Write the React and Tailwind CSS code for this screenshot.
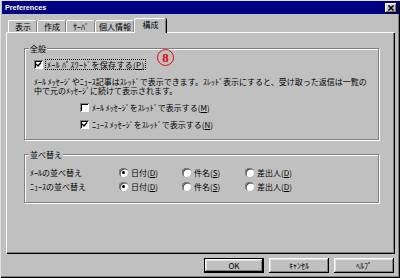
import React from "react";

const raised =
  "shadow-[inset_-1px_-1px_#000,inset_1px_1px_#fff,inset_-2px_-2px_#808080,inset_2px_2px_#dfdfdf]";

function Check({ checked }) {
  return (
    <div className="w-[9px] h-[9px] bg-white shadow-[inset_1px_1px_#808080,inset_-1px_-1px_#fff,inset_2px_2px_#000] flex items-center justify-center shrink-0">
      {checked && (
        <svg width="7" height="7" viewBox="0 0 7 7">
          <path d="M1 3 L3 5 L6 1.5" stroke="#000" strokeWidth="1.4" fill="none" />
        </svg>
      )}
    </div>
  );
}

function Radio({ checked }) {
  return (
    <div className="w-[9px] h-[9px] rounded-full bg-white shadow-[inset_1px_1px_#808080,inset_1.5px_1.5px_#303030] flex items-center justify-center shrink-0">
      {checked && <div className="w-[3px] h-[3px] rounded-full bg-black" />}
    </div>
  );
}

function Tab({ w, children, selected }) {
  if (selected)
    return (
      <div className="relative z-10 -mb-[1px] h-[15px] bg-[#c0c0c0] rounded-t-[2px] border-l border-t border-white shadow-[inset_-1px_0_#808080,1px_0_#000] flex items-start justify-center pt-[1px] w-[32px]">
        {children}
      </div>
    );
  return (
    <div
      className="h-[12px] rounded-t-[2px] border-l border-t border-white shadow-[inset_-1px_0_#808080,1px_0_#000] flex items-start justify-center pt-[1px]"
      style={{ width: w }}
    >
      {children}
    </div>
  );
}

function Btn({ children, def }) {
  return (
    <div
      className={`w-[60px] h-[15px] flex items-center justify-center ${
        def ? "border border-black" : ""
      }`}
    >
      <div className={`w-full h-full flex items-center justify-center ${raised}`}>{children}</div>
    </div>
  );
}

export default function App() {
  return (
    <div className="w-[400px] h-[278px] bg-[#c0c0c0] overflow-hidden border-l border-t border-[#dfdfdf] shadow-[inset_-1px_-1px_#000,inset_-2px_-2px_#808080] font-['Noto_Sans_CJK_JP',sans-serif] text-[8px] leading-[9px] text-black">
      {/* title bar */}
      <div className="mx-[1px] h-[13px] bg-[#000080] flex items-center justify-between pl-[3px] pr-[2px]">
        <span className="font-['Liberation_Sans',sans-serif] font-bold text-[7.2px] text-white leading-[8px]">
          Preferences
        </span>
        <div className={`w-[12px] h-[10px] bg-[#c0c0c0] flex items-center justify-center ${raised}`}>
          <svg width="6" height="6" viewBox="0 0 6 6">
            <path d="M0.5 0.5 L5.5 5.5 M5.5 0.5 L0.5 5.5" stroke="#000" strokeWidth="1.5" />
          </svg>
        </div>
      </div>

      {/* tabs */}
      <div className="mt-[4px] pl-[7px] h-[14px] flex items-end">
        <Tab w="29px">表示</Tab>
        <Tab w="29px">作成</Tab>
        <Tab w="29px">ｻｰﾊﾞ</Tab>
        <Tab w="39px">個人情報</Tab>
        <Tab selected>構成</Tab>
      </div>

      {/* panel */}
      <div className="ml-[5px] w-[388px] h-[221px] border-l border-t border-white shadow-[inset_-1px_-1px_#808080,1px_1px_#000] flex flex-col">
        {/* group 1 */}
        <div className="relative mt-[15px] ml-[17px] w-[355px] h-[92px] border border-[#808080] shadow-[inset_1px_1px_#fff,1px_1px_#fff] pl-[9px] pt-[10px]">
          <span className="absolute -top-[5px] left-[4px] bg-[#c0c0c0] px-[1px] leading-[9px]">全般</span>
          <div className="absolute left-[132px] top-[0px] w-[17px] h-[17px] rounded-full border-[1.5px] border-[#e8000b] flex items-center justify-center">
            <span className="font-['Liberation_Serif',serif] font-bold text-[13px] leading-[13px] text-[#e8000b]">8</span>
          </div>
          <div className="flex items-center h-[11px]">
            <Check checked />
            <div className="ml-[2px] px-[1px] h-[11px] inline-flex items-center border border-dotted border-black">
              <span className="leading-[9px] tracking-[0.3px]">
                ﾒｰﾙ ﾊﾟｽﾜｰﾄﾞを保存する(<u>P</u>)
              </span>
            </div>
          </div>
          <p className="mt-[7px]">
            ﾒｰﾙ ﾒｯｾｰｼﾞやﾆｭｰｽ記事はｽﾚｯﾄﾞで表示できます。ｽﾚｯﾄﾞ表示にすると、受け取った返信は一覧の
            <br />
            中で元のﾒｯｾｰｼﾞに続けて表示されます。
          </p>
          <div className="mt-[8px] ml-[46px] flex items-center gap-[3px] h-[9px]">
            <Check />
            <span>
              ﾒｰﾙ ﾒｯｾｰｼﾞをｽﾚｯﾄﾞで表示する(<u>M</u>)
            </span>
          </div>
          <div className="mt-[8px] ml-[46px] flex items-center gap-[3px] h-[9px]">
            <Check checked />
            <span>
              ﾆｭｰｽ ﾒｯｾｰｼﾞをｽﾚｯﾄﾞで表示する(<u>N</u>)
            </span>
          </div>
        </div>

        {/* group 2 */}
        <div className="relative mt-[14px] ml-[17px] w-[355px] h-[49px] border border-[#808080] shadow-[inset_1px_1px_#fff,1px_1px_#fff] pl-[5px] pt-[12px] flex flex-col gap-[3px]">
          <span className="absolute -top-[5px] left-[4px] bg-[#c0c0c0] px-[1px] leading-[9px]">並べ替え</span>
          {["ﾒｰﾙの並べ替え", "ﾆｭｰｽの並べ替え"].map((l) => (
            <div key={l} className="flex items-center h-[11px]">
              <span className="w-[89px]">{l}</span>
              <div className="w-[63px] flex items-center gap-[3px]">
                <Radio checked />
                <span>
                  日付(<u>D</u>)
                </span>
              </div>
              <div className="w-[63px] flex items-center gap-[3px]">
                <Radio />
                <span>
                  件名(<u>S</u>)
                </span>
              </div>
              <div className="flex items-center gap-[3px]">
                <Radio />
                <span>
                  差出人(<u>D</u>)
                </span>
              </div>
            </div>
          ))}
        </div>
      </div>

      {/* buttons */}
      <div className="mt-[5px] pl-[203px] flex gap-[5px]">
        <Btn def>OK</Btn>
        <Btn>ｷｬﾝｾﾙ</Btn>
        <Btn>ﾍﾙﾌﾟ</Btn>
      </div>
    </div>
  );
}
